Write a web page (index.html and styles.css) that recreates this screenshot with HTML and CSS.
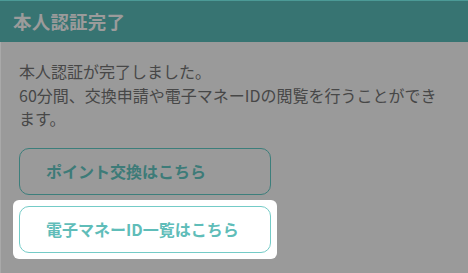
FILE: index.html
```html
<!DOCTYPE html>
<html lang="ja">
<head>
<meta charset="utf-8">
<link rel="stylesheet" href="styles.css">
</head>
<body>
<div class="modal">
  <div class="modal-header">本人認証完了</div>
  <div class="modal-body">
    <p class="message">本人認証が完了しました。<br>60分間、交換申請や電子マネーIDの閲覧を行うことができます。</p>
    <div class="actions">
      <a class="btn btn-dim">ポイント交換はこちら</a>
      <div class="spotlight">
        <a class="btn btn-lit">電子マネーID一覧はこちら</a>
      </div>
    </div>
  </div>
</div>
</body>
</html>
```
FILE: styles.css
```css
html, body {
  margin: 0;
  padding: 0;
  background: #9a9a9a;
}
body {
  width: 468px;
  height: 273px;
  overflow: hidden;
  font-family: "Noto Sans CJK JP", "Noto Sans", sans-serif;
}
.modal {
  height: 273px;
  display: flex;
  flex-direction: column;
}
.modal-header {
  height: 41px;
  border-top: 1px solid #4b9a96;
  background: #377472;
  color: #9b9b9b;
  font-size: 18.5px;
  font-weight: 700;
  line-height: 41px;
  padding-left: 13px;
  letter-spacing: 0.2px;
}
.modal-body {
  flex: 1;
  border-left: 1px solid #a9a9a9;
  padding: 18px 19px 0 18px;
}
.message {
  margin: 0;
  font-size: 16px;
  line-height: 23.5px;
  color: #474747;
}
.actions {
  margin-top: 17px;
  display: flex;
  flex-direction: column;
}
.btn {
  display: flex;
  align-items: center;
  box-sizing: border-box;
  width: 252px;
  height: 47px;
  padding-left: 26px;
  border-radius: 10px;
  font-size: 16px;
  font-weight: 700;
  text-decoration: none;
}
.btn-dim {
  border: 1.5px solid #3c7e7b;
  color: #3d7b78;
}
.spotlight {
  margin: 5px 0 0 -6px;
  padding: 6px;
  width: 252px;
  background: #ffffff;
  border-radius: 6px;
}
.btn-lit {
  border: 1.5px solid #74cbc7;
  color: #5fbdb9;
}
```
